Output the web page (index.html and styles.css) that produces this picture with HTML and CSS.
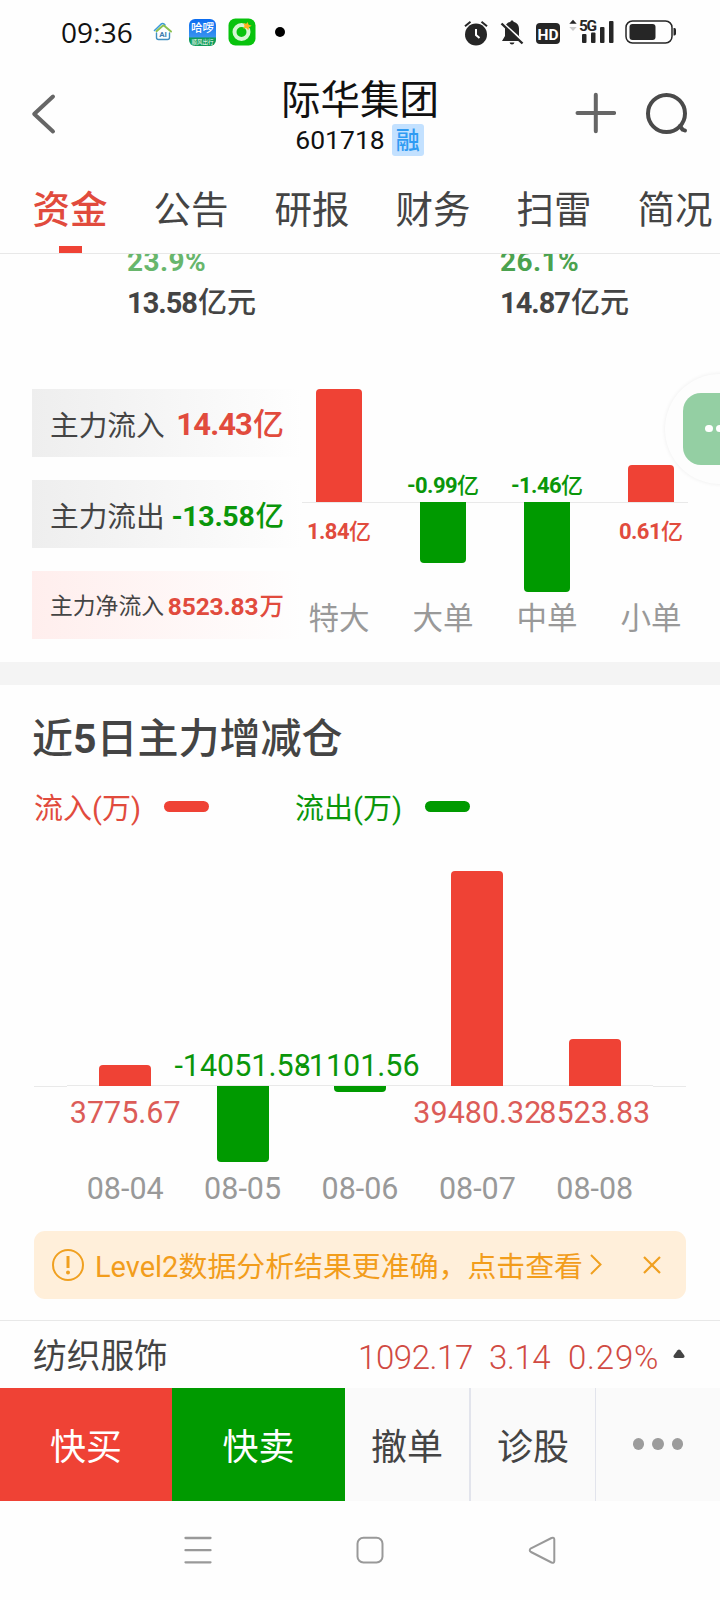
FILE: index.html
```html
<!DOCTYPE html>
<html lang="zh-CN">
<head>
<meta charset="utf-8">
<title>际华集团 601718</title>
<link rel="stylesheet" href="styles.css">
</head>
<body>
<div class="status">
  <span class="clock">09:36</span>
  <svg class="app-house" width="20" height="20" viewBox="0 0 20 20" fill="none" stroke-linecap="round" stroke-linejoin="round">
    <path d="M1.500 8.500 8 2.200q1.600-1.400 3.200 0L12 3" stroke="#3b9bd8" stroke-width="1.600"/>
    <path d="M3.500 9.200 9.500 4q1-.8 2 0L18 9.500" stroke="#8cc152" stroke-width="2"/>
    <path d="M3.500 11v4.500q0 2 2 2h9q2 0 2-2V11" stroke="#3f8fc0" stroke-width="1.400"/>
    <text x="10" y="14.500" text-anchor="middle" class="tiny-ai">AI</text>
  </svg>
  <span class="app-hello"><b>哈啰</b><i>顺风出行</i></span>
  <svg class="app-ring" width="28" height="28" viewBox="0 0 28 28">
    <rect x=".5" y=".5" width="27" height="27" rx="7" fill="#08c30d"/>
    <circle cx="13.500" cy="14" r="7" fill="none" stroke="#d5f7d3" stroke-width="4"/>
    <path d="M19.500 4l1.200 2.800 3 .9-2.700 1.500-.6 3-2.200-2.100-3 .5 1.400-2.700-1.300-2.700 3 .5z" fill="#ffb21e"/>
  </svg>
  <span class="dot"></span>
  <span class="spacer"></span>
  <svg class="sys" width="216" height="30" viewBox="0 0 216 30" fill="#262626">
    <g>
      <circle cx="14" cy="15.500" r="11"/>
      <path d="M3 7.200 8.500 2.800M25 7.200 19.500 2.800" stroke="#262626" stroke-width="2" fill="none"/>
      <path d="M14 10v6l3.500 3" stroke="#fff" stroke-width="2" fill="none"/>
    </g>
    <g>
      <path d="M50 1.500c.8 0 1.500.5 1.500 1.200 3.500.8 5.500 3.500 5.500 7v7.300l3 5H40l3-5V9.700c0-3.500 2-6.200 5.500-7 0-.7.700-1.200 1.500-1.200z"/>
      <path d="M47.500 23.500h5q-.5 2-2.500 2t-2.500-2z"/>
      <path d="M38.500 2.500 62.500 24" stroke="#fefefe" stroke-width="3"/>
      <path d="M39.500 4.500 60.500 24.500" stroke="#262626" stroke-width="2.400"/>
    </g>
    <rect x="74" y="4" width="24" height="21" rx="4"/>
    <text x="86" y="20.500" text-anchor="middle" class="hd">HD</text>
    <path d="M111 .800l3.700 4h-7.400z"/>
    <path d="M111 12l-3.700-4h7.400z" fill="#ccc"/>
    <text x="117" y="11.800" class="fiveg">5G</text>
    <rect x="120" y="15" width="4.500" height="9" rx="1"/>
    <rect x="129" y="13.500" width="4.500" height="10.500" rx="1"/>
    <rect x="138" y="8" width="4.500" height="16" rx="1"/>
    <rect x="147" y="2" width="4.500" height="22" rx="1"/>
    <rect x="164" y="2" width="46" height="22" rx="6.500" fill="none" stroke="#262626" stroke-width="1.500"/>
    <rect x="167.500" y="5" width="26" height="16" rx="3"/>
    <path d="M211.500 9h1q1.500 0 1.500 2v3.500q0 2-1.500 2h-1z"/>
  </svg>
</div>

<header class="header">
  <svg class="back" width="28" height="42" viewBox="0 0 28 42" fill="none" stroke="#666" stroke-width="4" stroke-linecap="round" stroke-linejoin="round"><path d="M22 3.500 3.200 21 22 38.500"/></svg>
  <div class="stock">
    <h1>际华集团</h1>
    <div class="code"><span>601718</span><span class="tag">融</span></div>
  </div>
  <div class="tools">
    <svg width="42" height="42" viewBox="0 0 42 42" stroke="#666" stroke-width="4" stroke-linecap="round"><path d="M3.500 21h36.600M21.800 2.700v36.600"/></svg>
    <svg width="44" height="44" viewBox="0 0 44 44" fill="none" stroke="#4a4a4a" stroke-width="4" stroke-linecap="round"><circle cx="21.500" cy="21.500" r="18.500"/><path d="M35 34l2.500 3.500 2.500 1"/></svg>
  </div>
</header>

<nav class="tabs">
  <a class="tab active">资金</a><a class="tab">公告</a><a class="tab">研报</a><a class="tab">财务</a><a class="tab">扫雷</a><a class="tab">简况</a>
</nav>

<main>
<section class="ratios">
  <div class="ratio"><span class="pct light">23.9%</span><span class="amount"><b>13.58</b>亿元</span></div>
  <div class="ratio"><span class="pct">26.1%</span><span class="amount"><b>14.87</b>亿元</span></div>
</section>

<section class="flow">
  <div class="cards">
    <div class="card"><span>主力流入</span><span class="value big red"><b>14.43</b>亿</span></div>
    <div class="card"><span>主力流出</span><span class="value mid green"><b>-13.58</b>亿</span></div>
    <div class="card net"><span>主力净流入</span><span class="value small red"><b>8523.83</b>万</span></div>
  </div>
  <div class="orders">
    <div class="col"><div class="up"><i class="bar" style="height:113px"></i></div><div class="down"><span class="num"><b>1.84</b>亿</span></div><span class="cat">特大</span></div>
    <div class="col"><div class="up"><span class="num"><b>-0.99</b>亿</span></div><div class="down"><i class="bar" style="height:61px"></i></div><span class="cat">大单</span></div>
    <div class="col"><div class="up"><span class="num"><b>-1.46</b>亿</span></div><div class="down"><i class="bar" style="height:90px"></i></div><span class="cat">中单</span></div>
    <div class="col"><div class="up"><i class="bar" style="height:37px"></i></div><div class="down"><span class="num"><b>0.61</b>亿</span></div><span class="cat">小单</span></div>
  </div>
  <div class="chat"><div class="bubble"><i></i><i></i><i></i></div></div>
</section>

<section class="history">
  <h2>近<b>5</b>日主力增减仓</h2>
  <div class="legend">
    <span class="key red">流入(万)<i></i></span>
    <span class="key green">流出(万)<i></i></span>
  </div>
  <div class="days">
    <div class="col"><div class="up"><i class="bar" style="height:21px"></i></div><div class="down"><span class="num">3775.67</span></div><span class="cat">08-04</span></div>
    <div class="col"><div class="up"><span class="num">-14051.58</span></div><div class="down"><i class="bar" style="height:76px"></i></div><span class="cat">08-05</span></div>
    <div class="col"><div class="up"><span class="num">-1101.56</span></div><div class="down"><i class="bar" style="height:6px"></i></div><span class="cat">08-06</span></div>
    <div class="col"><div class="up"><i class="bar" style="height:215px"></i></div><div class="down"><span class="num">39480.32</span></div><span class="cat">08-07</span></div>
    <div class="col"><div class="up"><i class="bar" style="height:47px"></i></div><div class="down"><span class="num">8523.83</span></div><span class="cat">08-08</span></div>
  </div>
  <div class="notice">
    <svg width="34" height="34" viewBox="0 0 34 34" fill="none" stroke="#f0a020" stroke-width="2"><circle cx="17" cy="17" r="15"/><path d="M17 8v12" stroke-width="3"/><circle cx="17" cy="24.500" r="2" fill="#f0a020" stroke="none"/></svg>
    <span class="msg">Level2<span class="han">数据分析结果更准确，点击查看</span></span>
    <svg width="12" height="22" viewBox="0 0 12 22" fill="none" stroke="#f0a020" stroke-width="2"><path d="M1 1 10.500 10.500 1 20"/></svg>
    <svg class="close" width="18" height="18" viewBox="0 0 18 18" fill="none" stroke="#f0a020" stroke-width="2.200"><path d="M1 1l16 16M17 1 1 17"/></svg>
  </div>
</section>
</main>

<div class="sector">
  <span class="name">纺织服饰</span>
  <span class="q q1">1092.17</span><span class="q q2">3.14</span><span class="q q3">0.29%</span>
  <svg width="12" height="10" viewBox="0 0 12 10"><path d="M4.600 1.200q1.400-1.400 2.800 0l3.800 5q1 2.600-1.200 2.800H2Q-.2 8.800.800 6.200z" fill="#444"/></svg>
</div>

<div class="actions">
  <span class="buy">快买</span><span class="sell">快卖</span><span class="act first">撤单</span><span class="act">诊股</span>
  <span class="act more"><i></i><i></i><i></i></span>
</div>

<div class="sysnav">
  <svg width="30" height="30" viewBox="0 0 30 30" stroke="#999" stroke-width="2.300" stroke-linecap="round"><path d="M2.500 3h25M2.500 15.200h25M2.500 27.300h25"/></svg>
  <svg width="30" height="30" viewBox="0 0 30 30" fill="none" stroke="#999" stroke-width="2"><rect x="2.500" y="2.700" width="25" height="24.800" rx="6"/></svg>
  <svg width="30" height="30" viewBox="0 0 30 30" fill="none" stroke="#999" stroke-width="2" stroke-linejoin="round"><path d="M4 13.300 24.500 3Q27.300 2 27.300 4.500v21.500q0 2.500-2.800 1.500L4 17q-2.500-1.800 0-3.700z"/></svg>
</div>
</body>
</html>
```

FILE: styles.css
```css
* { box-sizing: border-box; }
body {
  margin: 0;
  width: 720px;
  height: 1600px;
  overflow: hidden;
  display: flex;
  flex-direction: column;
  background: #fefefe;
  color: #444;
  font-family: Roboto, "Noto Sans CJK SC", sans-serif;
}
h1, h2 { margin: 0; font-weight: 400; }
i { font-style: normal; }
svg { display: block; flex: none; }
span { white-space: nowrap; }
.red { color: #e14b3d; }
.green { color: #0a960a; }

/* status bar */
.status { height: 64px; display: flex; align-items: center; padding: 0 42px 0 61px; }
.clock { width: 92px; color: #111; font: 500 28px/30px "Open Sans", "Noto Sans", sans-serif; letter-spacing: .1px; }
.app-house { margin-right: 16px; }
.tiny-ai { font: bold 8px Roboto, sans-serif; fill: #3f7fae; }
.app-hello {
  width: 27px; height: 27px; border-radius: 6px; margin-right: 12px; overflow: hidden;
  display: flex; flex-direction: column; align-items: center; color: #fff;
  background: linear-gradient(#0b6cf0 0, #3a93f0 68%, #109c58 69%);
}
.app-hello b { font-size: 11.500px; line-height: 19px; font-weight: 500; }
.app-hello i { font-size: 5.500px; line-height: 8px; }
.dot { width: 10px; height: 10px; margin-left: 19px; border-radius: 50%; background: #000; }
.spacer { flex: 1; }
.sys { margin-top: 3px; overflow: visible; }
.hd { font: bold 15.500px Roboto, sans-serif; fill: #fff; }
.fiveg { font: bold 15.500px Roboto, sans-serif; letter-spacing: -1.500px; }

/* title bar */
.header { height: 100px; display: grid; grid-template-columns: 1fr auto 1fr; padding: 0 31px; }
.back { margin-top: 29px; }
.stock { display: flex; flex-direction: column; align-items: center; padding-top: 16px; }
.stock h1 { font-size: 39.500px; line-height: 42px; color: #111; }
.code { display: flex; align-items: center; gap: 7px; height: 34px; margin-top: 1px; padding-right: 1px; font-size: 26.500px; line-height: 34px; color: #111; }
.tag { width: 32px; height: 32px; border-radius: 3px; background: #c3e1ff; color: #2f9bf3; font-size: 24px; line-height: 34px; font-weight: 500; text-align: center; }
.tools { display: flex; justify-content: flex-end; gap: 29px; padding-top: 28px; }

/* tabs */
.tabs { height: 90px; flex: none; display: flex; gap: 46px; padding: 0 0 0 32.500px; border-bottom: 1px solid #e8e8e8; }
.tab { flex: none; width: 75px; font-size: 37.500px; line-height: 93px; display: flex; flex-direction: column; align-items: center; }
.tab.active { color: #e14b3d; font-weight: 500; }
.tab.active::after { content: ""; width: 23px; height: 7px; margin-top: -11px; background: #ef4235; }

main { flex: none; height: 1066px; overflow: hidden; }

/* turnover ratios */
.ratios { display: flex; gap: 245px; padding-left: 127px; height: 135px; }
.ratio { width: 128px; display: flex; flex-direction: column; }
.pct { margin-top: -12px; font-size: 28px; line-height: 40px; font-weight: 700; letter-spacing: .4px; color: #4ba24f; }
.pct.light { color: #68b66c; }
.amount { font-size: 29px; line-height: 40px; margin-top: 1px; font-weight: 500; }
.amount b { letter-spacing: -1px; margin-right: 1px; }

/* main capital flow */
.flow { position: relative; display: flex; height: 273px; padding-left: 32px; }
.cards { width: 270px; display: flex; flex-direction: column; gap: 23px; }
.card { height: 68px; display: flex; align-items: center; justify-content: space-between; padding: 4px 18px 0 18px; font-size: 28.700px; line-height: 64px; background: linear-gradient(90deg, #eee, #fefefe); }
.card > span:first-child { padding-top: 2px; }
.card.net { font-size: 22.800px; background: linear-gradient(90deg, #ffeeed, #fefefe); }
.card.net > span:first-child { padding-top: 0; }
.value.big { font-size: 31px; font-weight: 500; }
.value.mid { font-size: 28.500px; font-weight: 500; padding-top: 1px; }
.value.small { font-size: 24.500px; font-weight: 500; }
.value b { letter-spacing: -.9px; margin-right: 1px; }
.value.mid b { letter-spacing: -.3px; }
.value.small b { letter-spacing: -.1px; }

.col { position: relative; display: flex; flex-direction: column; align-items: center; }
.up, .down { width: 100%; display: flex; flex-direction: column; align-items: center; }
.up { justify-content: flex-end; border-bottom: 1px solid #e9e9e9; color: #0a960a; }
.down { color: #e14b3d; }
.bar { flex: none; display: block; }
.up .bar { background: #ef4235; border-radius: 4px 4px 0 0; }
.down .bar { margin-top: -1px; background: #009a00; border-radius: 0 0 4px 4px; }
.cat { color: #999; }

.orders { display: flex; width: 416px; margin-left: -15px; margin-right: -100px; }
.orders .col { width: 104px; }
.orders .col:first-child .up { width: 89px; margin-left: 15px; padding-right: 15px; }
.orders .col:last-child .up { width: 89px; margin-right: 15px; padding-left: 15px; }
.orders .up { height: 114px; }
.orders .down { height: 98px; }
.orders .bar { width: 46px; }
.orders .num { font-size: 22px; line-height: 34px; font-weight: 500; }
.orders .num b { font-weight: 700; letter-spacing: -.6px; }
.orders .down .num { margin-top: 12px; }
.orders .up .num { margin-bottom: -1px; }
.orders .cat { font-size: 30.500px; line-height: 36px; }

.chat { position: absolute; left: 665px; top: -15px; width: 112px; height: 110px; border-radius: 55px; background: #fdfdfd; box-shadow: 0 0 4px rgba(0,0,0,.07); padding: 19px 18px; }
.bubble { width: 74px; height: 72px; border-radius: 18px; background: #94cfa3; display: flex; align-items: center; justify-content: center; gap: 3.500px; }
.bubble i { width: 7.500px; height: 7.500px; margin-top: -1px; border-radius: 50%; background: #fff; }

/* five-day history */
.history { border-top: 23px solid #f4f4f4; padding: 31px 34px 0; }
.history h2 { font-size: 41px; line-height: 46px; font-weight: 500; margin-left: -2px; }
.history h2 b { font-weight: 700; }
.legend { display: flex; margin-top: 28px; height: 38px; }
.key { display: flex; align-items: center; width: 261px; font-size: 29px; line-height: 38px; }
.key i { width: 45px; height: 11px; border-radius: 6px; background: #ef4235; margin: -6px 0 0 23px; }
.key.green i { background: #009a00; }
.days { display: flex; justify-content: center; margin-top: 42px; }
.days::before, .days::after { content: ""; width: 32.500px; height: 216px; border-bottom: 1px solid #e9e9e9; }
.days .col { width: 117.400px; }
.days .up { height: 216px; }
.days .down { height: 84px; }
.days .bar { width: 52px; }
.days .up .bar { margin-bottom: -1px; }
.days .down .bar { margin-top: 0; }
.days .num { font-size: 30.500px; line-height: 40px; }
.days .up .num { margin-bottom: -1px; }
.days .down .num { margin-top: 7px; color: #dc5c58; }
.days .cat { font-size: 30.500px; line-height: 38px; }
.notice { height: 68px; margin-top: 23px; border-radius: 11px; background: #ffefda; color: #f29d1c; display: flex; align-items: center; padding-left: 17px; font-size: 29px; line-height: 68px; }
.msg { margin: 3px 7px 0 10px; width: 488px; display: flex; justify-content: space-between; }
.han { font-size: 28.900px; }
.close { margin-left: 41px; }

/* sector quote */
.sector { flex: none; height: 68px; border-top: 1px solid #e8e8e8; display: flex; align-items: center; padding-left: 33px; }
.name { width: 325px; font-size: 33.700px; line-height: 66px; padding-top: 4px; }
.q { color: #d04a42; font-size: 33px; line-height: 66px; padding-top: 6px; font-weight: 350; letter-spacing: -.4px; }
.q1 { width: 131px; }
.q2 { width: 79px; }
.q3 { width: 105px; letter-spacing: .8px; }
.sector svg { margin-top: -1px; }

/* trade actions */
.actions { flex: none; height: 113px; display: flex; font-size: 36px; line-height: 120px; text-align: center; background: #fafafa; }
.buy { width: 172px; background: #ef4235; color: #fff; }
.sell { width: 173px; background: #009a00; color: #fff; }
.act { width: 126px; border-left: 1px solid #e2e4ec; }
.act.first { width: 124px; border-left: 0; }
.act:nth-child(4) { border-left-width: 2px; }
.more { flex: 1; display: flex; justify-content: center; align-items: center; gap: 8px; }
.more i { width: 11.500px; height: 12px; margin-top: -1px; border-radius: 50%; background: #9c9c9c; }

.sysnav { flex: 1; display: flex; justify-content: center; gap: 142px; padding: 34px 0 0 19px; }
```
